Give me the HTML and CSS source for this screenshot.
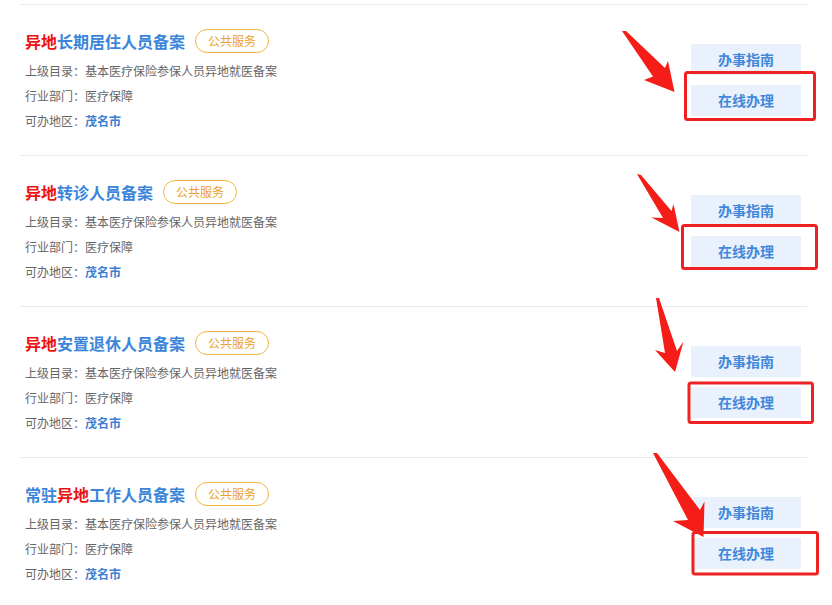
FILE: index.html
```html
<!DOCTYPE html>
<html lang="zh-CN">
<head>
<meta charset="utf-8">
<link rel="stylesheet" href="styles.css">
</head>
<body>
<div class="page">
  <ul class="list">
    <li class="item">
      <div class="info">
        <div class="title-row">
          <span class="title"><em>异地</em>长期居住人员备案</span>
          <span class="badge">公共服务</span>
        </div>
        <p class="meta">上级目录：基本医疗保险参保人员异地就医备案</p>
        <p class="meta">行业部门：医疗保障</p>
        <p class="meta">可办地区：<b>茂名市</b></p>
      </div>
      <div class="actions">
        <a class="btn">办事指南</a>
        <a class="btn">在线办理</a>
      </div>
    </li>
    <li class="item">
      <div class="info">
        <div class="title-row">
          <span class="title"><em>异地</em>转诊人员备案</span>
          <span class="badge">公共服务</span>
        </div>
        <p class="meta">上级目录：基本医疗保险参保人员异地就医备案</p>
        <p class="meta">行业部门：医疗保障</p>
        <p class="meta">可办地区：<b>茂名市</b></p>
      </div>
      <div class="actions">
        <a class="btn">办事指南</a>
        <a class="btn">在线办理</a>
      </div>
    </li>
    <li class="item">
      <div class="info">
        <div class="title-row">
          <span class="title"><em>异地</em>安置退休人员备案</span>
          <span class="badge">公共服务</span>
        </div>
        <p class="meta">上级目录：基本医疗保险参保人员异地就医备案</p>
        <p class="meta">行业部门：医疗保障</p>
        <p class="meta">可办地区：<b>茂名市</b></p>
      </div>
      <div class="actions">
        <a class="btn">办事指南</a>
        <a class="btn">在线办理</a>
      </div>
    </li>
    <li class="item">
      <div class="info">
        <div class="title-row">
          <span class="title">常驻<em>异地</em>工作人员备案</span>
          <span class="badge">公共服务</span>
        </div>
        <p class="meta">上级目录：基本医疗保险参保人员异地就医备案</p>
        <p class="meta">行业部门：医疗保障</p>
        <p class="meta">可办地区：<b>茂名市</b></p>
      </div>
      <div class="actions">
        <a class="btn">办事指南</a>
        <a class="btn">在线办理</a>
      </div>
    </li>
  </ul>
  <svg class="annot" width="832" height="605" viewBox="0 0 832 605">
    <g fill="#f41d17">
      <polygon points="622,31 626,31 665,68 668,61 674.5,92 644,80 653,76.5"/>
      <polygon points="637,174 641,175 671.5,211 673.5,204 679.5,232 651.5,217.5 663,218"/>
      <polygon points="656,298 659,298 677,351 683.5,341.5 675,372 655,350 665,353"/>
      <polygon points="653,453 657,453 700,510 704.5,501.5 703.5,537 673,521 688,520"/>
    </g>
    <g fill="none" stroke="#ee2222" stroke-width="3">
      <rect x="685.5" y="72.5" width="129" height="47" rx="2"/>
      <rect x="682.5" y="225.5" width="134" height="43" rx="2"/>
      <rect x="689" y="383" width="123.5" height="39.5" rx="2"/>
      <rect x="693" y="532.5" width="124.5" height="41.5" rx="2"/>
    </g>
  </svg>
</div>
</body>
</html>
```
FILE: styles.css
```css
* { box-sizing: border-box; }
html, body { margin: 0; padding: 0; background: #fff; }
body {
  font-family: "Noto Sans CJK SC", "Noto Sans", sans-serif;
  color: #666;
}
.page { position: relative; width: 832px; height: 605px; overflow: hidden; }
.list {
  list-style: none;
  margin: 4px 0 0 20px;
  padding: 0;
  width: 787px;
}
.item {
  border-top: 1px solid #e9e9e9;
  height: 151px;
  padding-left: 5px;
  padding-right: 6px;
  display: flex;
  justify-content: space-between;
}
.info { padding-top: 24px; }
.title-row { display: flex; align-items: center; height: 24px; }
.title {
  font-size: 16px;
  font-weight: bold;
  color: #3b86da;
  line-height: 24px;
}
.title em { font-style: normal; color: #ee1111; }
.badge {
  margin-left: 10px;
  height: 24px;
  padding: 0 12px;
  border: 1px solid #efb53b;
  border-radius: 12px;
  color: #eb9f2e;
  font-size: 12px;
  line-height: 22px;
}
.meta {
  margin: 0;
  font-size: 12px;
  line-height: 25px;
  color: #666;
}
.meta:first-of-type { margin-top: 5px; }
.meta b { color: #3b80d3; font-weight: bold; }
.actions {
  padding-top: 39px;
  display: flex;
  flex-direction: column;
  gap: 10px;
}
.btn {
  display: block;
  width: 110px;
  height: 31px;
  background: #e9f2fc;
  color: #4187da;
  font-size: 14px;
  font-weight: bold;
  text-align: center;
  line-height: 31px;
}
.annot { position: absolute; left: 0; top: 0; pointer-events: none; }
```
